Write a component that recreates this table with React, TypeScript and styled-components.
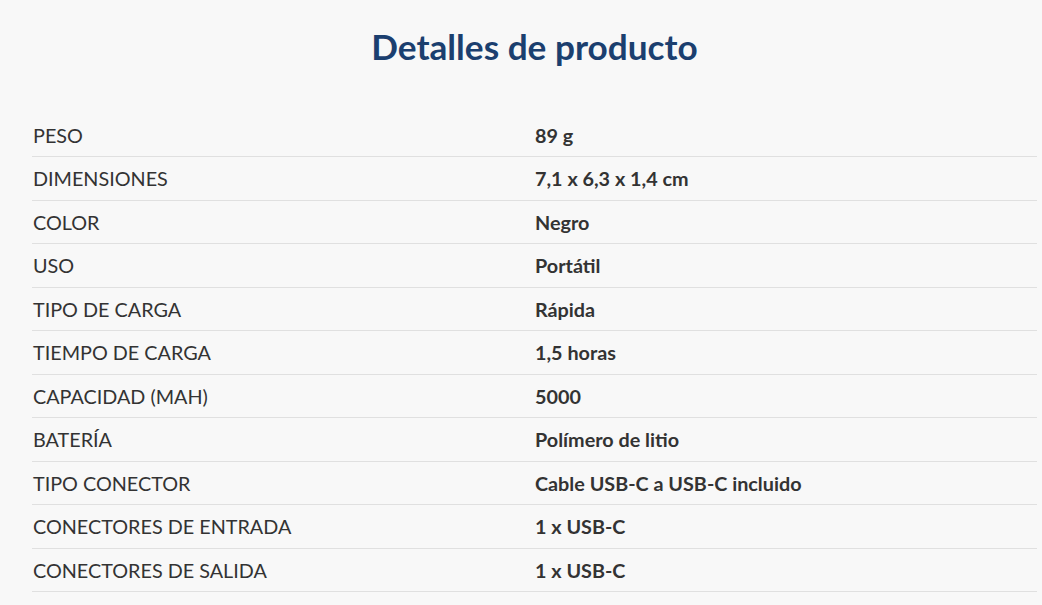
import React from 'react';
import styled, { createGlobalStyle } from 'styled-components';

const GlobalStyle = createGlobalStyle`
	html, body {
		margin: 0;
		padding: 0;
		background: #f8f8f8;
	}
	body {
		font-family: Lato, "Open Sans", sans-serif;
	}
`;

const Container = styled.div`
	width: 1005px;
	margin-left: 32px;
	padding-top: 25px;
`;

const Title = styled.h2`
	margin: 0 0 46.5px;
	text-align: center;
	font-size: 35.2px;
	font-weight: 700;
	line-height: 42px;
	color: #1b3f6f;
`;

const Table = styled.div`
	display: grid;
	grid-template-columns: 503px 1fr;
`;

const Cell = styled.div<{ $bold?: boolean }>`
	height: 42.5px;
	display: flex;
	align-items: center;
	border-bottom: 1px solid #e0e0e0;
	font-size: 19.8px;
	color: #333;
	font-weight: ${(p) => (p.$bold ? 700 : 400)};
	padding-left: ${(p) => (p.$bold ? '0' : '1px')};
`;

const specs: [string, string][] = [
	['PESO', '89 g'],
	['DIMENSIONES', '7,1 x 6,3 x 1,4 cm'],
	['COLOR', 'Negro'],
	['USO', 'Portátil'],
	['TIPO DE CARGA', 'Rápida'],
	['TIEMPO DE CARGA', '1,5 horas'],
	['CAPACIDAD (MAH)', '5000'],
	['BATERÍA', 'Polímero de litio'],
	['TIPO CONECTOR', 'Cable USB-C a USB-C incluido'],
	['CONECTORES DE ENTRADA', '1 x USB-C'],
	['CONECTORES DE SALIDA', '1 x USB-C'],
];

const App: React.FC = () => {
	return (
		<>
			<GlobalStyle />
			<Container>
				<Title>Detalles de producto</Title>
				<Table>
					{specs.map(([label, value]) => (
						<React.Fragment key={label}>
							<Cell>{label}</Cell>
							<Cell $bold>{value}</Cell>
						</React.Fragment>
					))}
				</Table>
			</Container>
		</>
	);
};

export default App;
